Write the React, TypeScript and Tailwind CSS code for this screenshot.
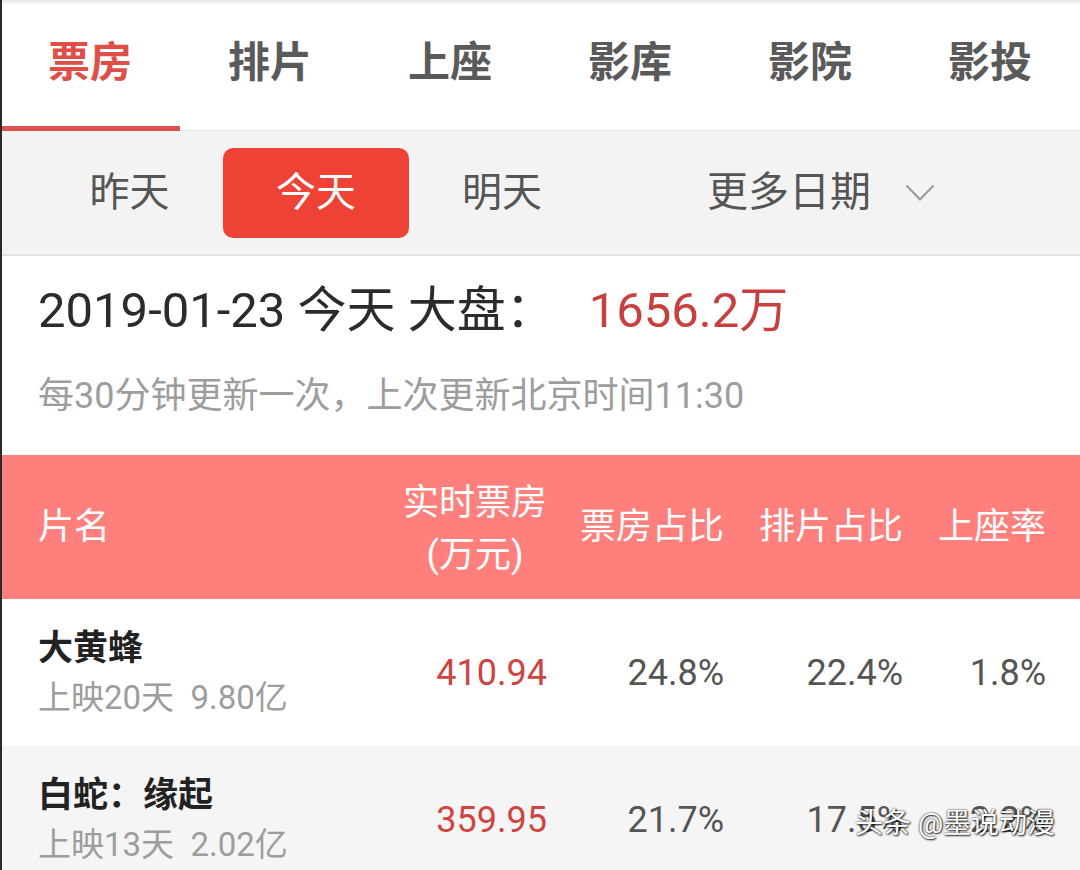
import React from "react";

const FONT = "font-['Roboto','Noto_Sans_CJK_SC',sans-serif]";

const tabs = ["票房", "排片", "上座", "影库", "影院", "影投"];

const rows = [
  { name: "大黄蜂", sub: "上映20天  9.80亿", box: "410.94", p1: "24.8%", p2: "22.4%", p3: "1.8%", bg: "bg-white" },
  { name: "白蛇：缘起", sub: "上映13天  2.02亿", box: "359.95", p1: "21.7%", p2: "17.5%", p3: "2.2%", bg: "bg-[#f5f5f5]" },
];

export default function App() {
  return (
    <div className={`relative w-[1080px] h-[870px] overflow-hidden bg-white ${FONT}`}>
      {/* top shadow strip */}
      <div className="h-[5px] bg-gradient-to-b from-[#e6e6e6] to-white" />

      {/* main tabs */}
      <div className="grid grid-cols-6 h-[126px] bg-white border-b border-[#e4e4e4]">
        {tabs.map((t, i) => (
          <div key={t} className="relative flex items-center justify-center pb-[10px]">
            <span
              className={`text-[42px] font-bold leading-none ${i === 0 ? "text-[#df4f47]" : "text-[#5a5a5a]"}`}
            >
              {t}
            </span>
            {i === 0 && <div className="absolute left-0 right-0 bottom-[-1px] h-[5px] bg-[#dd534d]" />}
          </div>
        ))}
      </div>

      {/* date bar */}
      <div className="flex items-center h-[125px] bg-[#f3f3f3] border-b-2 border-[#e2e2e2] pl-[36px]">
        <div className="w-[187px] flex items-center justify-center text-[40px] text-[#555] leading-none">昨天</div>
        <div className="w-[186px] h-[90px] rounded-[10px] bg-[#ee4237] flex items-center justify-center text-[40px] text-white leading-none">
          今天
        </div>
        <div className="w-[186px] flex items-center justify-center text-[40px] text-[#555] leading-none">明天</div>
        <div className="ml-[112px] flex items-center gap-[34px]">
          <span className="text-[41px] text-[#555] leading-none">更多日期</span>
          <svg width="30" height="18" viewBox="0 0 30 18" fill="none">
            <path d="M1.5 1.5 L15 15.5 L28.5 1.5" stroke="#9a9a9a" strokeWidth="2.2" />
          </svg>
        </div>
      </div>

      {/* summary */}
      <div className="bg-white h-[199px] pl-[38px] pt-[26px]">
        <div className="flex items-center h-[56px] leading-none">
          <span className="text-[49px] text-[#2b2b2b]">2019-01-23 今天 大盘：</span>
          <span className="ml-[34px] text-[49px] text-[#c7403d]">1656.2万</span>
        </div>
        <div className="mt-[40px] text-[36px] leading-none text-[#9d9d9d]">每30分钟更新一次，上次更新北京时间11:30</div>
      </div>

      {/* table header */}
      <div className="flex items-center h-[144px] bg-[#ff7f7c] pl-[38px] pr-[34px] text-white text-[36px] leading-none">
        <div className="flex-1">片名</div>
        <div className="w-[150px] flex justify-end">
          <div className="text-center leading-[52px] mt-[4px]">
            <div>实时票房</div>
            <div>(万元)</div>
          </div>
        </div>
        <div className="w-[177px] text-right">票房占比</div>
        <div className="w-[179px] text-right">排片占比</div>
        <div className="w-[143px] text-right">上座率</div>
      </div>

      {/* rows */}
      {rows.map((r) => (
        <div key={r.name} className={`flex items-center h-[147px] pl-[38px] pr-[34px] ${r.bg}`}>
          <div className="flex-1 flex flex-col gap-[15px] leading-none">
            <span className="text-[35px] font-bold text-[#222]">{r.name}</span>
            <span className="text-[33px] text-[#9d9d9d] whitespace-pre">{r.sub}</span>
          </div>
          <div className="w-[150px] text-right text-[36px] text-[#cf4440] leading-none">{r.box}</div>
          <div className="w-[177px] text-right text-[36px] text-[#555] leading-none">{r.p1}</div>
          <div className="w-[179px] text-right text-[36px] text-[#555] leading-none">{r.p2}</div>
          <div className="w-[143px] text-right text-[36px] text-[#555] leading-none">{r.p3}</div>
        </div>
      ))}

      {/* left dark edge */}
      <div className="absolute left-0 top-0 bottom-0 w-[2px] bg-[#2a2a2a]" />

      {/* watermark */}
      <div className="absolute left-[855px] top-[810px] text-[28px] leading-none text-white [text-shadow:0_0_2px_rgba(0,0,0,0.9),1px_1px_2px_rgba(0,0,0,0.8)]">
        头条 @墨说动漫
      </div>
    </div>
  );
}
